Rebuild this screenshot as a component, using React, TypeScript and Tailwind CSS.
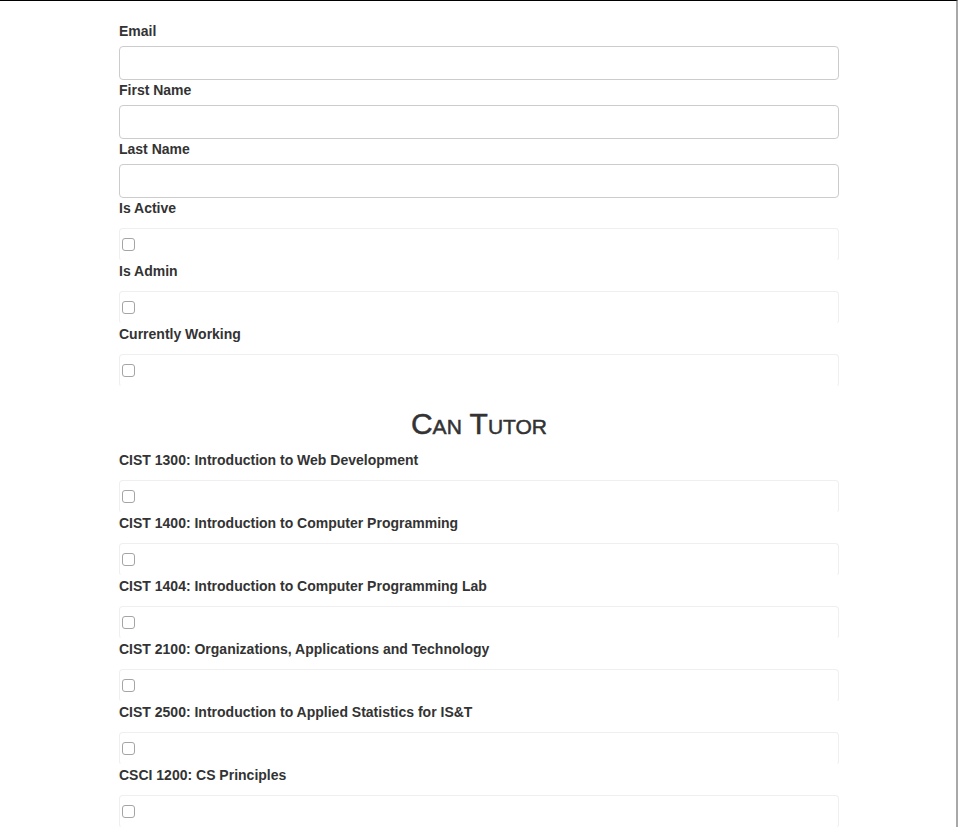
import React from 'react';

const inputs = ['Email', 'First Name', 'Last Name'];
const flags = ['Is Active', 'Is Admin', 'Currently Working'];
const courses = [
  'CIST 1300: Introduction to Web Development',
  'CIST 1400: Introduction to Computer Programming',
  'CIST 1404: Introduction to Computer Programming Lab',
  'CIST 2100: Organizations, Applications and Technology',
  'CIST 2500: Introduction to Applied Statistics for IS&T',
  'CSCI 1200: CS Principles',
];

const CheckField: React.FC<{ label: string }> = ({ label }) => (
  <div>
    <label className="block h-5 leading-5 mb-[10px] text-[14px] font-bold text-[#333]">{label}</label>
    <div className="h-[33px] flex items-center border border-[#efefef] border-b-transparent rounded-[4px]">
      <span className="ml-[2px] w-[13px] h-[13px] rounded-[3px] border border-[#a5a5a5] bg-white" />
    </div>
  </div>
);

const App: React.FC = () => {
  return (
    <div className="w-[959px] h-[827px] overflow-hidden bg-white" style={{ fontFamily: '"Liberation Sans", Arial, sans-serif' }}>
      <div className="w-[958px] h-full border-t border-black border-r-2 border-r-[#a8a8a8] overflow-hidden pl-[119px]">
        <div className="w-[720px] pt-5">
          {inputs.map((name) => (
            <div key={name}>
              <label className="block h-5 leading-5 mb-[5px] text-[14px] font-bold text-[#333]">{name}</label>
              <div className="h-[34px] border border-[#cccccc] rounded-[4px] bg-white" />
            </div>
          ))}
          {flags.map((f) => (
            <CheckField key={f} label={f} />
          ))}
          <h2 className="mt-5 mb-[10px] text-center text-[30px] leading-[33px] text-[#333] [font-variant:small-caps] [-webkit-text-stroke:0.5px_#333]">
            Can Tutor
          </h2>
          {courses.map((c) => (
            <CheckField key={c} label={c} />
          ))}
        </div>
      </div>
    </div>
  );
};

export default App;
